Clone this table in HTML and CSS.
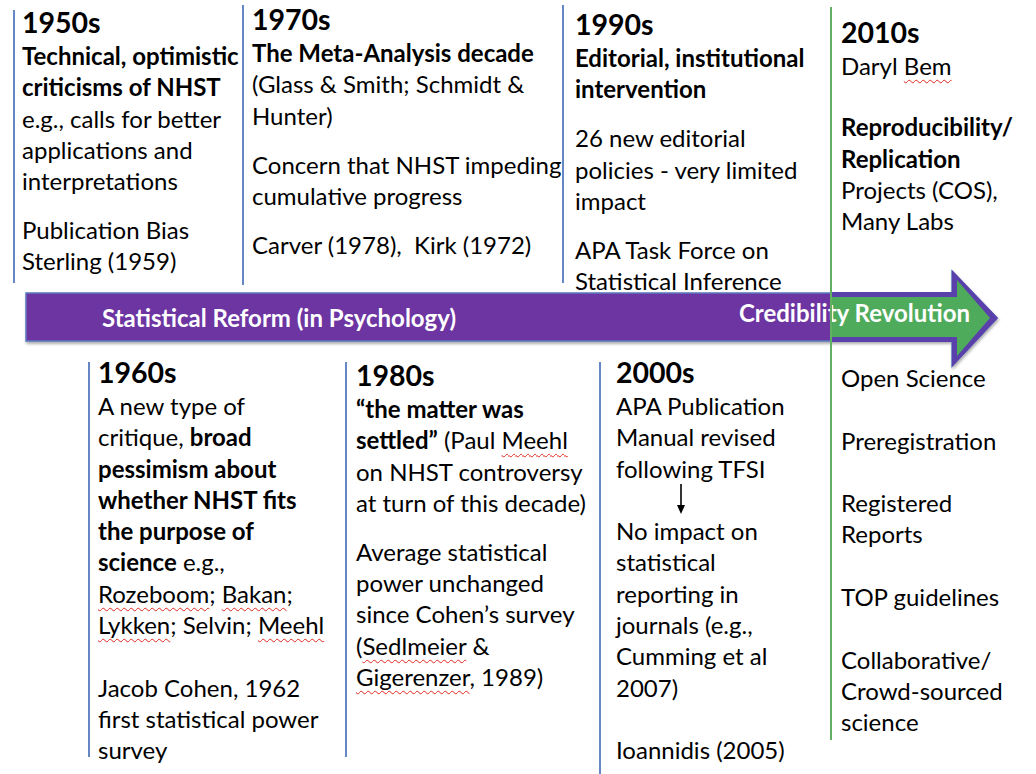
FILE: index.html
```html
<!DOCTYPE html>
<html lang="en">
<head>
<meta charset="utf-8">
<title>Statistical Reform timeline</title>
<link rel="stylesheet" href="styles.css">
</head>
<body>
<div class="slide">
  <div class="top">
    <section class="col c1950">
      <div class="vline"></div>
      <div class="txt">
        <h2>1950s</h2>
        <p><b>Technical, optimistic<br>criticisms of NHST</b><br>e.g., calls for better<br>applications and<br>interpretations</p>
        <p class="gap">Publication Bias<br>Sterling (1959)</p>
      </div>
    </section>
    <section class="col c1970">
      <div class="vline"></div>
      <div class="txt">
        <h2>1970s</h2>
        <p><b>The Meta-Analysis decade</b><br>(Glass &amp; Smith; Schmidt &amp;<br>Hunter)</p>
        <p class="gap">Concern that NHST impeding<br>cumulative progress</p>
        <p class="gap">Carver (1978),&nbsp; Kirk (1972)</p>
      </div>
    </section>
    <section class="col c1990">
      <div class="vline"></div>
      <div class="txt">
        <h2>1990s</h2>
        <p><b>Editorial, institutional<br>intervention</b></p>
        <p class="gap">26 new editorial<br>policies - very limited<br>impact</p>
        <p class="gap">APA Task Force on<br>Statistical Inference</p>
      </div>
    </section>
    <section class="col c2010">
      <div class="txt">
        <h2>2010s</h2>
        <p>Daryl <span class="sp">Bem</span></p>
        <p class="gap2"><b>Reproducibility/<br>Replication</b><br>Projects (COS),<br>Many Labs</p>
      </div>
    </section>
  </div>

  <div class="arrow">
    <svg class="arrow-shape" width="1036" height="49" viewBox="0 292 1036 49" aria-hidden="true">
      <defs>
        <filter id="sh" x="-5%" y="-50%" width="110%" height="200%">
          <feDropShadow dx="1" dy="2" stdDeviation="1.5" flood-color="#000" flood-opacity="0.35"/>
        </filter>
      </defs>
      <polygon points="26,293 952,293 952,271 997,318 952,366 952,341 26,341" fill="#6c34a2" stroke="#5a78bd" stroke-width="1.5" filter="url(#sh)"/>
      <polygon points="831,292 952,292 952,270 998,318 952,367 952,342 831,342" fill="#5a40aa"/>
      <polygon points="832,297 957,297 957,280 990,318 957,356 957,337 832,337" fill="#4fab5c"/>
    </svg>
    <span class="lbl lbl-left">Statistical Reform (in Psychology)</span>
    <span class="lbl lbl-right">Credibility Revolution</span>
  </div>

  <div class="bottom">
    <section class="col c1960">
      <div class="vline"></div>
      <div class="txt">
        <h2>1960s</h2>
        <p>A new type of<br>critique, <b>broad<br>pessimism about<br>whether NHST fits<br>the purpose of<br>science</b> e.g.,<br><span class="sp">Rozeboom</span>; <span class="sp">Bakan</span>;<br><span class="sp">Lykken</span>; Selvin; <span class="sp">Meehl</span></p>
        <p class="blank">Jacob Cohen, 1962<br>first statistical power<br>survey</p>
      </div>
    </section>
    <section class="col c1980">
      <div class="vline"></div>
      <div class="txt">
        <h2>1980s</h2>
        <p><b>“the matter was<br>settled”</b> (Paul <span class="sp">Meehl</span><br>on NHST controversy<br>at turn of this decade)</p>
        <p class="gap">Average statistical<br>power unchanged<br>since Cohen’s survey<br>(<span class="sp">Sedlmeier</span> &amp;<br><span class="sp">Gigerenzer</span>, 1989)</p>
      </div>
    </section>
    <section class="col c2000">
      <div class="vline"></div>
      <div class="txt">
        <h2>2000s</h2>
        <p>APA Publication<br>Manual revised<br>following TFSI</p>
        <div class="down">
          <svg width="12" height="31" viewBox="0 0 12 31" aria-hidden="true">
            <line x1="6" y1="0" x2="6" y2="23" stroke="#000" stroke-width="1.6"/>
            <polygon points="2,21 10,21 6,30" fill="#000"/>
          </svg>
        </div>
        <p>No impact on<br>statistical<br>reporting in<br>journals (e.g.,<br>Cumming et al<br>2007)</p>
        <p class="blank">Ioannidis (2005)</p>
      </div>
    </section>
    <section class="col c2010b">
      <div class="txt">
        <p>Open Science</p>
        <p class="blank">Preregistration</p>
        <p class="blank">Registered<br>Reports</p>
        <p class="blank">TOP guidelines</p>
        <p class="blank">Collaborative/<br>Crowd-sourced<br>science</p>
      </div>
    </section>
  </div>

  <div class="green-line"></div>
</div>
</body>
</html>
```

FILE: styles.css
```css
html, body {
  margin: 0;
  padding: 0;
  background: #ffffff;
}

body {
  font-family: Lato, "Liberation Sans", sans-serif;
  color: #000;
}

.slide {
  position: relative;
  width: 1036px;
  height: 774px;
  overflow: hidden;
}

.top {
  display: flex;
  height: 292px;
}

.bottom {
  display: flex;
  height: 433px;
}

.col {
  display: flex;
  flex: none;
}

.vline {
  flex: none;
  width: 2px;
  background: #6587c4;
}

.txt {
  white-space: nowrap;
  font-size: 24px;
  line-height: 31.3px;
}

.txt h2 {
  margin: 0;
  font-size: 28.5px;
  line-height: 36px;
  font-weight: 700;
}

.txt p {
  margin: 0;
}

.txt b {
  font-weight: 700;
}

.txt .gap {
  margin-top: 17.7px;
}

.txt .gap2 {
  margin-top: 30px;
}

.txt .blank {
  margin-top: 31.3px;
}

.sp {
  text-decoration: underline wavy #e0281e;
  text-decoration-thickness: 1px;
  text-underline-offset: 4px;
}

/* top row columns */
.c1950 { margin-left: 13px; width: 229px; }
.c1950 .vline { margin-top: 10px; height: 273px; }
.c1950 .txt { margin-left: 7px; padding-top: 4px; }

.c1970 { width: 320px; }
.c1970 .vline { margin-top: 5px; height: 280px; }
.c1970 .txt { margin-left: 8px; padding-top: 1px; }

.c1990 { width: 268px; }
.c1990 .vline { margin-top: 5px; height: 278px; }
.c1990 .txt { margin-left: 11px; padding-top: 6px; }

.c2010 { flex: 1; }
.c2010 .txt { padding-left: 11px; padding-top: 14px; }

/* bottom row columns */
.c1960 { margin-left: 88px; width: 257px; }
.c1960 .vline { margin-top: 21px; height: 395px; }
.c1960 .txt { margin-left: 8px; padding-top: 13px; }

.c1980 { width: 254px; }
.c1980 .vline { margin-top: 21px; height: 395px; }
.c1980 .txt { margin-left: 9px; padding-top: 16px; }

.c2000 { width: 231px; }
.c2000 .vline { margin-top: 21px; height: 412px; }
.c2000 .txt { margin-left: 15px; padding-top: 13px; }

.c2010b { flex: 1; }
.c2010b .txt { padding-left: 11px; padding-top: 21px; }

.down {
  height: 31.3px;
  padding-left: 59px;
}

.down svg {
  display: block;
}

/* arrow band */
.arrow {
  position: relative;
  height: 49px;
  display: flex;
  align-items: center;
}

.arrow-shape {
  position: absolute;
  left: 0;
  top: 0;
  overflow: visible;
}

.lbl {
  position: relative;
  color: #fff;
  font-weight: 700;
  font-size: 24px;
  line-height: 28px;
  white-space: nowrap;
}

.lbl-left {
  margin-left: 102px;
  margin-top: 3px;
}

.lbl-right {
  margin-left: auto;
  margin-right: 66px;
  margin-bottom: 8px;
}

.green-line {
  position: absolute;
  left: 830px;
  top: 7px;
  width: 2px;
  height: 733px;
  background: #62b062;
  z-index: 2;
}
```
